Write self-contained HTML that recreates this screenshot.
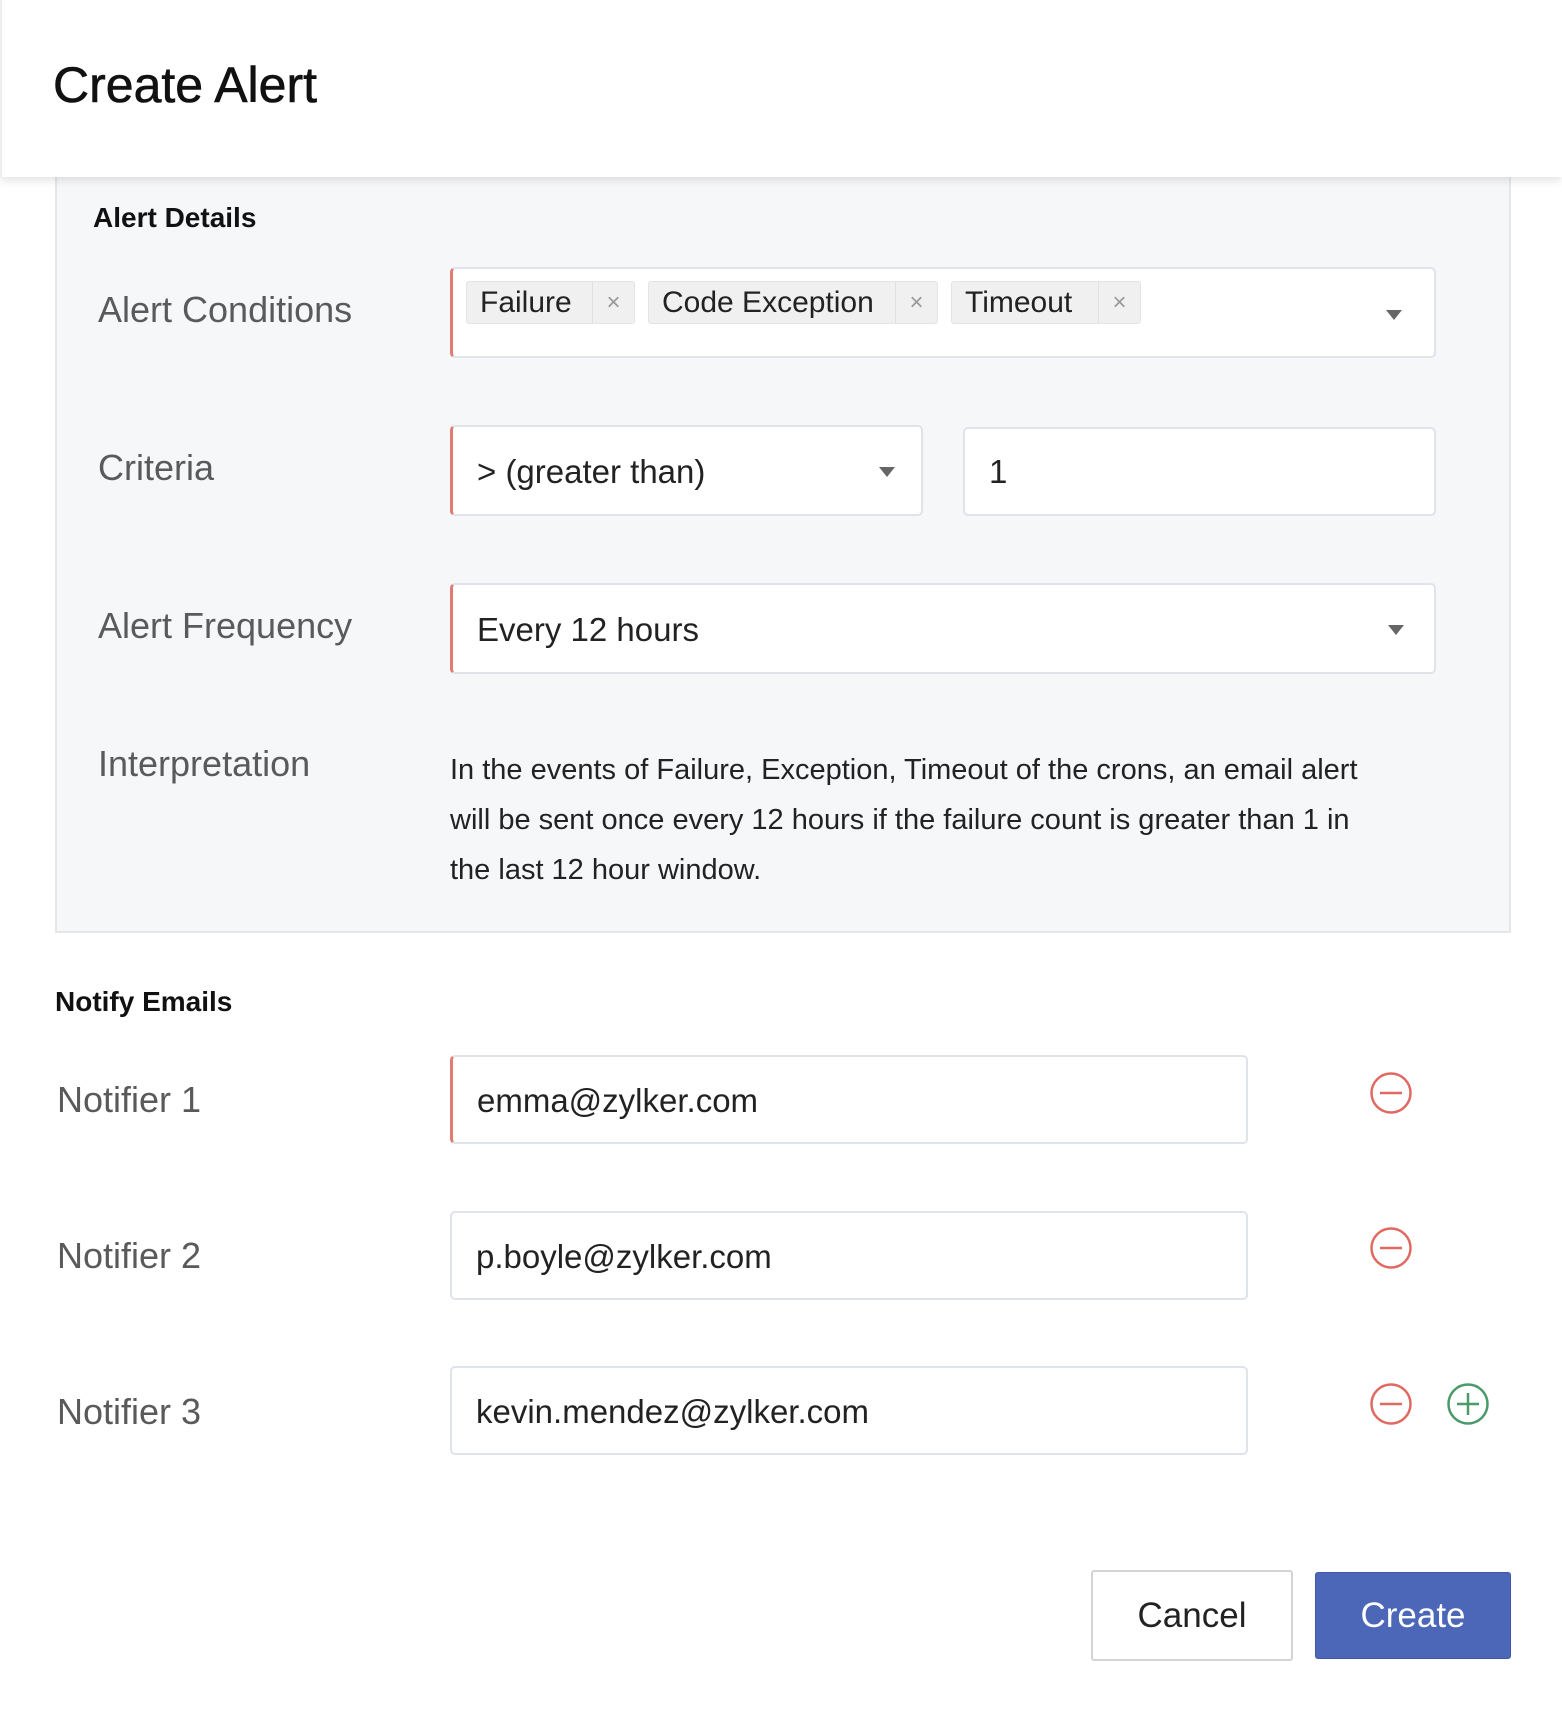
<!DOCTYPE html>
<html><head><meta charset="utf-8"><style>
*{box-sizing:border-box;margin:0;padding:0}
body{width:1562px;height:1710px;background:#fff;font-family:"Liberation Sans",sans-serif;position:relative;overflow:hidden;color:#222}
.a{position:absolute}
.hdr{left:0;top:0;width:1562px;height:177px;background:#fff;box-shadow:0 4px 8px rgba(0,0,0,.10);z-index:2;border-left:2px solid #eee}
.title{left:51px;top:56px;font-size:50px;color:#111;-webkit-text-stroke:0.6px #111}
.panel{left:55px;top:170px;width:1456px;height:763px;background:#f6f7f9;border:2px solid #e4e6ea}
.h2{font-size:28px;font-weight:bold;color:#111}
.lbl{font-size:36px;color:#5a5a5a}
.box{background:#fff;border:2px solid #e1e3ea;border-radius:5px}
.req{border-left:3px solid #e07b73}
.chip{position:absolute;top:12px;height:43px;background:#f0f0f0;border:1px solid #e4e4e4;border-radius:3px;font-size:30px;line-height:41px;padding-left:13px;color:#222}
.chip span{position:absolute;right:0;top:0;width:42px;height:41px;border-left:1px solid #e0e0e0;text-align:center;color:#999;font-size:24px}
.caret{position:absolute;width:0;height:0;border-left:8px solid transparent;border-right:8px solid transparent;border-top:10px solid #666}
.val{position:absolute;left:24px;font-size:33px;color:#222}
.interp{left:450px;top:745px;width:945px;font-size:29px;line-height:50px;color:#222}
.btn{font-size:35px;text-align:center;border-radius:3px}
</style></head><body>
<div class="a hdr"><div class="a title">Create Alert</div></div>
<div class="a panel"></div>
<div class="a h2" style="left:93px;top:202px">Alert Details</div>

<div class="a lbl" style="left:98px;top:289px">Alert Conditions</div>
<div class="a box req" style="left:450px;top:267px;width:986px;height:91px">
 <div class="chip" style="left:13px;width:169px">Failure<span>×</span></div>
 <div class="chip" style="left:195px;width:290px">Code Exception<span>×</span></div>
 <div class="chip" style="left:498px;width:190px">Timeout<span>×</span></div>
 <div class="caret" style="right:32px;top:41px"></div>
</div>

<div class="a lbl" style="left:98px;top:447px">Criteria</div>
<div class="a box req" style="left:450px;top:425px;width:473px;height:91px">
 <div class="val" style="top:26px">&gt; (greater than)</div>
 <div class="caret" style="right:26px;top:40px"></div>
</div>
<div class="a box" style="left:963px;top:427px;width:473px;height:89px">
 <div class="val" style="top:24px">1</div>
</div>

<div class="a lbl" style="left:98px;top:605px">Alert Frequency</div>
<div class="a box req" style="left:450px;top:583px;width:986px;height:91px">
 <div class="val" style="top:26px">Every 12 hours</div>
 <div class="caret" style="right:30px;top:40px"></div>
</div>

<div class="a lbl" style="left:98px;top:743px">Interpretation</div>
<div class="a interp">In the events of Failure, Exception, Timeout of the crons, an email alert will be sent once every 12 hours if the failure count is greater than 1 in the last 12 hour window.</div>

<div class="a h2" style="left:55px;top:986px">Notify Emails</div>

<div class="a lbl" style="left:57px;top:1079px">Notifier 1</div>
<div class="a box req" style="left:450px;top:1055px;width:798px;height:89px"><div class="val" style="top:25px">emma@zylker.com</div></div>
<div class="a lbl" style="left:57px;top:1235px">Notifier 2</div>
<div class="a box" style="left:450px;top:1211px;width:798px;height:89px"><div class="val" style="top:25px">p.boyle@zylker.com</div></div>
<div class="a lbl" style="left:57px;top:1391px">Notifier 3</div>
<div class="a box" style="left:450px;top:1366px;width:798px;height:89px"><div class="val" style="top:25px">kevin.mendez@zylker.com</div></div>

<svg class="a" style="left:1368px;top:1070px" width="46" height="46"><circle cx="23" cy="23" r="19.5" fill="none" stroke="#e06a62" stroke-width="2.5"/><line x1="12" y1="23" x2="34" y2="23" stroke="#e06a62" stroke-width="2.5"/></svg>
<svg class="a" style="left:1368px;top:1225px" width="46" height="46"><circle cx="23" cy="23" r="19.5" fill="none" stroke="#e06a62" stroke-width="2.5"/><line x1="12" y1="23" x2="34" y2="23" stroke="#e06a62" stroke-width="2.5"/></svg>
<svg class="a" style="left:1368px;top:1381px" width="46" height="46"><circle cx="23" cy="23" r="19.5" fill="none" stroke="#e06a62" stroke-width="2.5"/><line x1="12" y1="23" x2="34" y2="23" stroke="#e06a62" stroke-width="2.5"/></svg>
<svg class="a" style="left:1445px;top:1381px" width="46" height="46"><circle cx="23" cy="23" r="19.5" fill="none" stroke="#4a9a6a" stroke-width="2.5"/><line x1="12" y1="23" x2="34" y2="23" stroke="#4a9a6a" stroke-width="2.5"/><line x1="23" y1="12" x2="23" y2="34" stroke="#4a9a6a" stroke-width="2.5"/></svg>

<div class="a btn" style="left:1091px;top:1570px;width:202px;height:91px;border:2px solid #d4d4d4;background:#fff;line-height:87px;color:#222">Cancel</div>
<div class="a btn" style="left:1315px;top:1572px;width:196px;height:87px;background:#4c66b8;border:1px solid #3f58a8;color:#fff;line-height:85px">Create</div>
</body></html>
